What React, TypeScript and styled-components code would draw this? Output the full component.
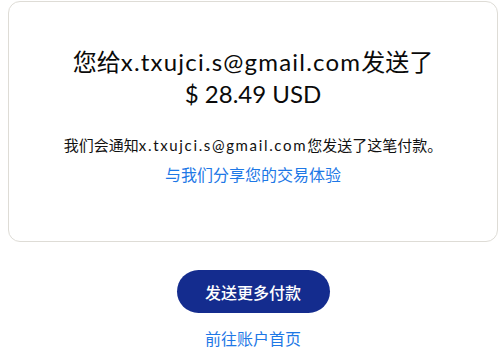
import React from "react";
import styled, { createGlobalStyle } from "styled-components";

const Global = createGlobalStyle`
  html, body { margin: 0; padding: 0; background: #ffffff; }
  body {
    font-family: Lato, "Noto Sans CJK SC", sans-serif;
    color: #111111;
  }
`;

const Page = styled.main`
  padding: 1px 2px 0 8px;
  display: flex;
  flex-direction: column;
  align-items: stretch;
`;

const Card = styled.section`
  border: 1px solid #dedcd6;
  border-radius: 12px;
  padding: 44px 16px 55px;
  display: flex;
  flex-direction: column;
  align-items: center;
  text-align: center;
`;

const Heading = styled.h1`
  margin: 0;
  font-size: 24px;
  line-height: 32px;
  font-weight: 400;
  color: #0a0a0a;
`;

const Email = styled.span<{ $spacing: number }>`
  letter-spacing: ${(p) => p.$spacing}px;
`;

const Note = styled.p`
  margin: 24px 0 0;
  font-size: 15px;
  line-height: 22px;
  color: #111111;
`;

const TextLink = styled.a<{ $gap: number }>`
  margin-top: ${(p) => p.$gap}px;
  font-size: 16px;
  line-height: 22px;
  color: #1e78e6;
  text-decoration: none;
  cursor: pointer;
`;

const Actions = styled.div`
  margin-top: 28px;
  display: flex;
  flex-direction: column;
  align-items: center;
`;

const PrimaryButton = styled.button`
  width: 153px;
  height: 43px;
  border: none;
  border-radius: 22px;
  background: #142c8e;
  color: #ffffff;
  font-family: Lato, "Noto Sans CJK SC", sans-serif;
  font-size: 16px;
  font-weight: 500;
  cursor: pointer;
`;

export default function App() {
  return (
    <>
      <Global />
      <Page>
        <Card>
          <Heading>
            您给<Email $spacing={1.2}>x.txujci.s@gmail.com</Email>发送了
            <br />$ 28.49 USD
          </Heading>
          <Note>
            我们会通知<Email $spacing={1.65}>x.txujci.s@gmail.com</Email>您发送了这笔付款。
          </Note>
          <TextLink $gap={8}>与我们分享您的交易体验</TextLink>
        </Card>
        <Actions>
          <PrimaryButton>发送更多付款</PrimaryButton>
          <TextLink $gap={15}>前往账户首页</TextLink>
        </Actions>
      </Page>
    </>
  );
}
